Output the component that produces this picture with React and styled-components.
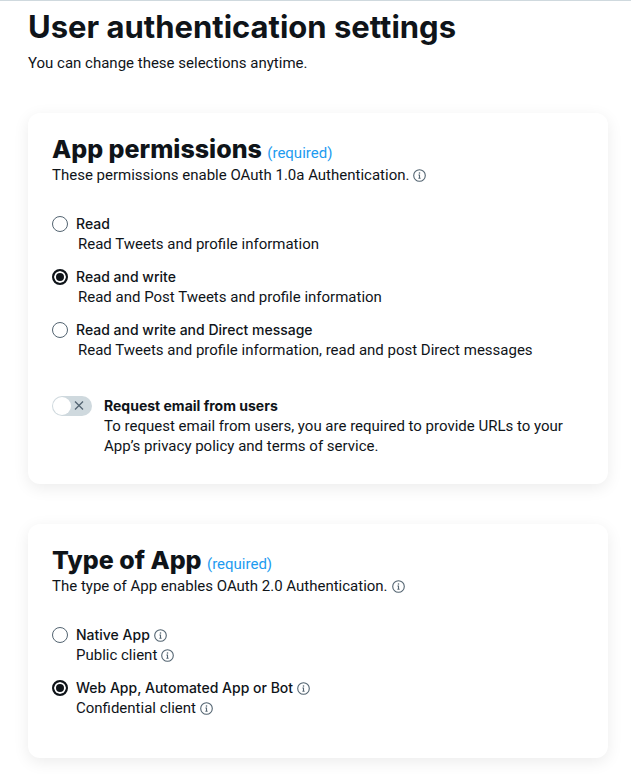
import React, { useState } from "react";
import styled, { createGlobalStyle, ThemeProvider } from "styled-components";

const theme = {
  colors: {
    text: "#0f1419",
    muted: "#536471",
    link: "#1d9bf0",
    line: "#cfd9de",
    background: "#ffffff",
  },
};

const GlobalStyle = createGlobalStyle`
  *, *::before, *::after {
    box-sizing: border-box;
  }
  body {
    margin: 0;
    background: ${({ theme }) => theme.colors.background};
    color: ${({ theme }) => theme.colors.text};
    font-family: Roboto, "Liberation Sans", sans-serif;
    font-size: 15px;
    line-height: 20px;
  }
`;

const Main = styled.main`
  border-top: 1px solid ${({ theme }) => theme.colors.line};
  padding: 7px 23px 16px 28px;
`;

const PageTitle = styled.h1`
  margin: 0 0 7px;
  font-family: Inter, Roboto, sans-serif;
  font-size: 31px;
  font-weight: 650;
  line-height: 38px;
`;

const Text = styled.p`
  margin: 0;
`;

const Card = styled.section`
  margin-top: 40px;
  padding: 24px 24px ${({ $bottom }) => $bottom}px;
  border-radius: 12px;
  background: ${({ theme }) => theme.colors.background};
  box-shadow: 0 4px 16px rgba(0, 0, 0, 0.08);
`;

const CardTitle = styled.h2`
  margin: 0 0 4px;
  font-family: Inter, Roboto, sans-serif;
  font-size: 25px;
  font-weight: 800;
  line-height: 24px;
`;

const Required = styled.span`
  color: ${({ theme }) => theme.colors.link};
  font-family: Roboto, sans-serif;
  font-size: 15px;
  font-weight: 400;
  line-height: 15px;
`;

const Options = styled.fieldset`
  display: flex;
  flex-direction: column;
  gap: 13px;
  min-width: 0;
  margin: 29px 0 0;
  padding: 0;
  border: 0;
`;

const OptionRow = styled.div`
  display: grid;
  grid-template-columns: 16px 1fr;
  column-gap: 8px;
  align-items: center;
`;

const Radio = styled.input`
  appearance: none;
  width: 16px;
  height: 16px;
  margin: 0;
  border: 1px solid ${({ theme }) => theme.colors.muted};
  border-radius: 50%;
  &:checked {
    border: 2px solid ${({ theme }) => theme.colors.text};
    background: ${({ theme }) => theme.colors.text};
    box-shadow: inset 0 0 0 2px ${({ theme }) => theme.colors.background};
  }
`;

const Label = styled.label`
  font-family: Inter, Roboto, sans-serif;
  font-size: 14px;
  font-weight: ${({ $strong }) => ($strong ? 700 : 500)};
`;

const Description = styled.p`
  grid-column: 2;
  margin: 0;
  padding-left: ${({ $indent }) => ($indent ? 2 : 0)}px;
`;

const ToggleRow = styled.div`
  display: grid;
  grid-template-columns: 40px 1fr;
  column-gap: 12px;
  margin-top: 36px;
`;

const Toggle = styled.span`
  position: relative;
  height: 20px;
  svg {
    position: absolute;
    top: 4px;
    right: 8px;
    opacity: ${({ $on }) => ($on ? 0 : 1)};
    pointer-events: none;
  }
`;

const Switch = styled.input`
  appearance: none;
  display: flex;
  width: 40px;
  height: 20px;
  margin: 0;
  padding: 1px;
  border-radius: 10px;
  background: ${({ theme }) => theme.colors.line};
  &::before {
    content: "";
    width: 18px;
    height: 18px;
    border-radius: 50%;
    background: ${({ theme }) => theme.colors.background};
  }
  &:checked {
    justify-content: flex-end;
    background: ${({ theme }) => theme.colors.link};
  }
`;

const InfoButton = styled.button`
  display: inline-flex;
  margin: 0 0 0 4px;
  padding: 0;
  border: 0;
  background: none;
  color: ${({ theme }) => theme.colors.muted};
  vertical-align: -2px;
`;

const Info = () => (
  <InfoButton type="button" aria-label="More information">
    <svg width="13" height="13" viewBox="0 0 13 13" fill="none">
      <circle cx="6.5" cy="6.5" r="5.8" stroke="currentColor" strokeWidth="1.1" />
      <circle cx="6.5" cy="4" r="0.8" fill="currentColor" />
      <path d="M5.4 6h1.1v3.3M5.4 9.2h2.2" stroke="currentColor" strokeWidth="1.1" />
    </svg>
  </InfoButton>
);

const Cross = () => (
  <svg width="10" height="10" viewBox="0 0 10 10" fill="none" aria-hidden="true">
    <path d="M1 1.5l8 8M9 1.5l-8 8" stroke="#536471" strokeWidth="1.3" />
  </svg>
);

const permissions = [
  {
    id: "read",
    label: "Read",
    description: "Read Tweets and profile information",
  },
  {
    id: "write",
    label: "Read and write",
    description: "Read and Post Tweets and profile information",
  },
  {
    id: "message",
    label: "Read and write and Direct message",
    description:
      "Read Tweets and profile information, read and post Direct messages",
  },
];

const appTypes = [
  { id: "native", label: "Native App", description: "Public client" },
  {
    id: "web",
    label: "Web App, Automated App or Bot",
    description: "Confidential client",
  },
];

const OptionList = ({ name, label, options, initial, info }) => {
  const [selected, setSelected] = useState(initial);
  return (
    <Options aria-label={label}>
      {options.map((option) => (
        <OptionRow key={option.id}>
          <Radio
            type="radio"
            id={option.id}
            name={name}
            checked={selected === option.id}
            onChange={() => setSelected(option.id)}
          />
          <div>
            <Label htmlFor={option.id}>{option.label}</Label>
            {info && <Info />}
          </div>
          <Description $indent={!info}>
            {option.description}
            {info && <Info />}
          </Description>
        </OptionRow>
      ))}
    </Options>
  );
};

const App = () => {
  const [email, setEmail] = useState(false);
  return (
    <ThemeProvider theme={theme}>
      <GlobalStyle />
      <Main>
        <PageTitle>User authentication settings</PageTitle>
        <Text>You can change these selections anytime.</Text>
        <Card $bottom={28}>
          <CardTitle>
            App permissions <Required>(required)</Required>
          </CardTitle>
          <Text>
            These permissions enable OAuth 1.0a Authentication.
            <Info />
          </Text>
          <OptionList
            name="permissions"
            label="App permissions"
            options={permissions}
            initial="write"
          />
          <ToggleRow>
            <Toggle $on={email}>
              <Switch
                type="checkbox"
                role="switch"
                id="email"
                checked={email}
                onChange={(e) => setEmail(e.target.checked)}
              />
              <Cross />
            </Toggle>
            <Label htmlFor="email" $strong>
              Request email from users
            </Label>
            <Description>
              To request email from users, you are required to provide URLs to
              your App’s privacy policy and terms of service.
            </Description>
          </ToggleRow>
        </Card>
        <Card $bottom={40}>
          <CardTitle>
            Type of App <Required>(required)</Required>
          </CardTitle>
          <Text>
            The type of App enables OAuth 2.0 Authentication.
            <Info />
          </Text>
          <OptionList
            name="type"
            label="Type of App"
            options={appTypes}
            initial="web"
            info
          />
        </Card>
      </Main>
    </ThemeProvider>
  );
};

export default App;
